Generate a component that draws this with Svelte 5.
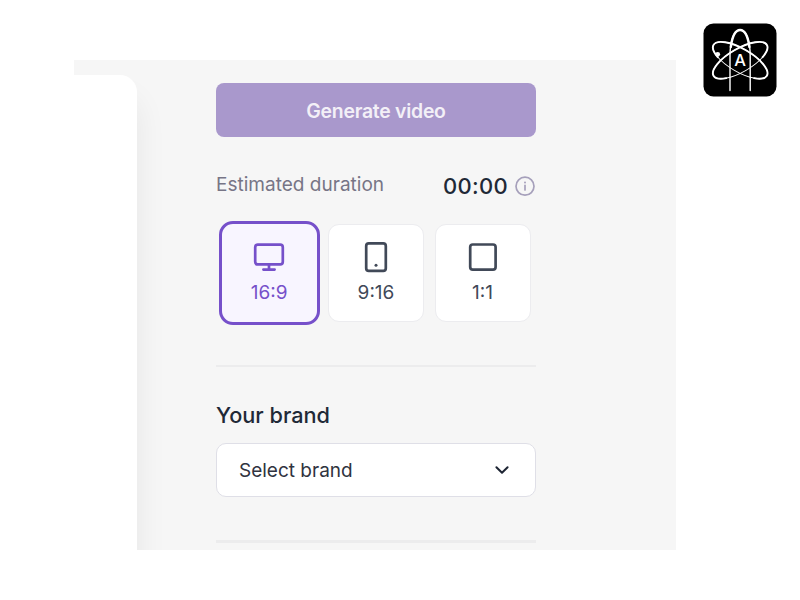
<script lang="ts">
  type Ratio = "16:9" | "9:16" | "1:1";

  const ratios: Ratio[] = ["16:9", "9:16", "1:1"];

  let selected: Ratio = $state("16:9");
  let duration = $state("00:00");
</script>

<main class="page">
  <section class="stage">
    <div class="preview"></div>

    <div class="settings">
      <button class="generate">Generate video</button>

      <div class="duration">
        <span class="duration_label">Estimated duration</span>
        <span class="duration_value">{duration}</span>
        <svg class="info" width="22" height="22" viewBox="0 0 22 22">
          <circle cx="11" cy="11.2" r="9" fill="none" stroke="#a6a0bb" stroke-width="1.7" />
          <path d="M11 10.4V15" stroke="#a6a0bb" stroke-width="1.7" stroke-linecap="round" />
          <circle cx="11" cy="7.6" r="1" fill="#a6a0bb" />
        </svg>
      </div>

      <div class="ratios">
        {#each ratios as ratio}
          <button
            class="ratio"
            class:selected={selected === ratio}
            onclick={() => (selected = ratio)}>
            <svg class="ratio_icon" width="34" height="34" viewBox="0 0 34 34">
              {#if ratio === "16:9"}
                <rect x="3.2" y="4.6" width="27.6" height="19.8" rx="2.6" />
                <path d="M17 24.4V29.6M11.4 29.6H22.6" />
              {:else if ratio === "9:16"}
                <rect x="7.2" y="3.4" width="19.6" height="27.4" rx="2.6" />
                <circle class="dot" cx="17" cy="25.2" r="1.5" />
              {:else}
                <rect x="4.2" y="4.5" width="25.4" height="25.2" rx="2.6" />
              {/if}
            </svg>
            <span class="ratio_label">{ratio}</span>
          </button>
        {/each}
      </div>

      <hr class="divider" />

      <h2 class="brand_title">Your brand</h2>
      <button class="select">
        <span>Select brand</span>
        <svg width="18" height="18" viewBox="0 0 18 18">
          <path d="M3.4 6.2L9 11.8L14.6 6.2" />
        </svg>
      </button>

      <hr class="divider thick" />
    </div>
  </section>

  <svg class="logo" width="74" height="74" viewBox="0 0 74 74">
    <rect x="0.5" y="0.5" width="73" height="73" rx="10" fill="#000" />
    <g fill="none" stroke="#fff" stroke-linecap="round">
      <path d="M27 67.5V33C27 18 31 7 37.1 7S47.2 18 47.2 33V67.5" stroke-width="1.4" />
      <path d="M27.8 24C29.3 13 32.8 7 37.1 7S44.9 13 46.4 24" stroke-width="2.4" />
      <!-- orbits: thin full ring, heavier stroke over the upper side -->
      {#each [-30, 30] as angle}
        <g transform="translate(37.2 37.3) rotate({angle})">
          <ellipse rx="30.8" ry="11.6" stroke-width="0.9" />
          <path d="M-21 8.5A30.8 11.6 0 1 1 21 8.5" stroke-width="1.9" />
        </g>
      {/each}
    </g>
    <circle cx="14.7" cy="31.3" r="2.4" fill="#fff" />
    <text class="logo_letter" x="37.2" y="43" text-anchor="middle">A</text>
  </svg>
</main>

<style>
  :global(body) {
    background: #fff;
  }

  .page {
    position: relative;
    box-sizing: border-box;
    width: 800px;
    height: 600px;
    padding: 60px 0 0 74px;
    overflow: hidden;
    font-family: Inter, "Liberation Sans", sans-serif;
    color: #1f2937;
  }

  .stage {
    display: flex;
    width: 602px;
    height: 490px;
    background: #f6f6f6;
    overflow: hidden;
  }

  .preview {
    flex: none;
    width: 63px;
    height: 560px;
    margin-top: 15.4px;
    background: #fff;
    border-top-right-radius: 17px;
    box-shadow: 0 24px 32px rgba(0, 0, 0, 0.07);
  }

  .settings {
    display: flex;
    flex-direction: column;
    width: 320px;
    margin: 23px 0 0 79px;
  }

  button {
    box-sizing: border-box;
    margin: 0;
    font-family: inherit;
    cursor: pointer;
  }

  .generate {
    flex: none;
    height: 54px;
    padding: 2px 0 0;
    border: none;
    border-radius: 8px;
    background: #a998cc;
    color: #f3f0f7;
    font-size: 19.4px;
    font-weight: 600;
    letter-spacing: -0.25px;
  }

  .duration {
    display: flex;
    align-items: center;
    height: 30px;
    margin-top: 34px;
  }

  .duration_label {
    margin: -3px auto 0 0;
    font-size: 19.05px;
    color: #777586;
  }

  .duration_value {
    font-size: 22px;
    font-weight: 500;
    letter-spacing: 0.3px;
  }

  .info {
    margin-left: 6px;
  }

  .ratios {
    display: flex;
    align-items: center;
    height: 104px;
    margin: 20px 0 0 2.5px;
  }

  .ratio {
    display: flex;
    flex: none;
    flex-direction: column;
    align-items: center;
    width: 96px;
    height: 98px;
    padding: 15px 0 0;
    margin-right: 10.5px;
    border: 1px solid #ececef;
    border-radius: 11px;
    background: #fff;
    color: #414958;
  }

  .ratio.selected {
    width: 101.5px;
    height: 104px;
    padding-top: 16px;
    margin-right: 8px;
    border: 3px solid #7650ca;
    border-radius: 14px;
    background: #f8f5ff;
    color: #7650ca;
  }

  .ratio_icon {
    flex: none;
    fill: none;
    stroke: currentColor;
    stroke-width: 2.7;
    stroke-linecap: round;
  }

  .dot {
    fill: currentColor;
    stroke: none;
  }

  .ratio_label {
    margin-top: 7px;
    font-size: 19px;
    line-height: 24px;
  }

  .divider {
    flex: none;
    width: 100%;
    height: 2px;
    margin: 40px 0 0;
    border: none;
    background: #ececed;
  }

  .brand_title {
    margin: 34px 0 0;
    font-size: 21.7px;
    line-height: 28px;
    font-weight: 500;
  }

  .select {
    display: flex;
    flex: none;
    align-items: center;
    justify-content: space-between;
    height: 54px;
    margin-top: 14px;
    padding: 0 24px 0 22px;
    border: 1px solid #dfdfe7;
    border-radius: 10px;
    background: #fff;
    color: #303340;
    font-size: 19px;
  }

  .select path {
    fill: none;
    stroke: #1d2433;
    stroke-width: 2;
    stroke-linecap: round;
    stroke-linejoin: round;
  }

  .divider.thick {
    height: 3px;
    margin-top: 43px;
  }

  .logo {
    position: absolute;
    top: 23px;
    left: 703px;
  }

  .logo_letter {
    fill: #fff;
    font-family: Inter, sans-serif;
    font-size: 16.5px;
    font-weight: 500;
  }
</style>
